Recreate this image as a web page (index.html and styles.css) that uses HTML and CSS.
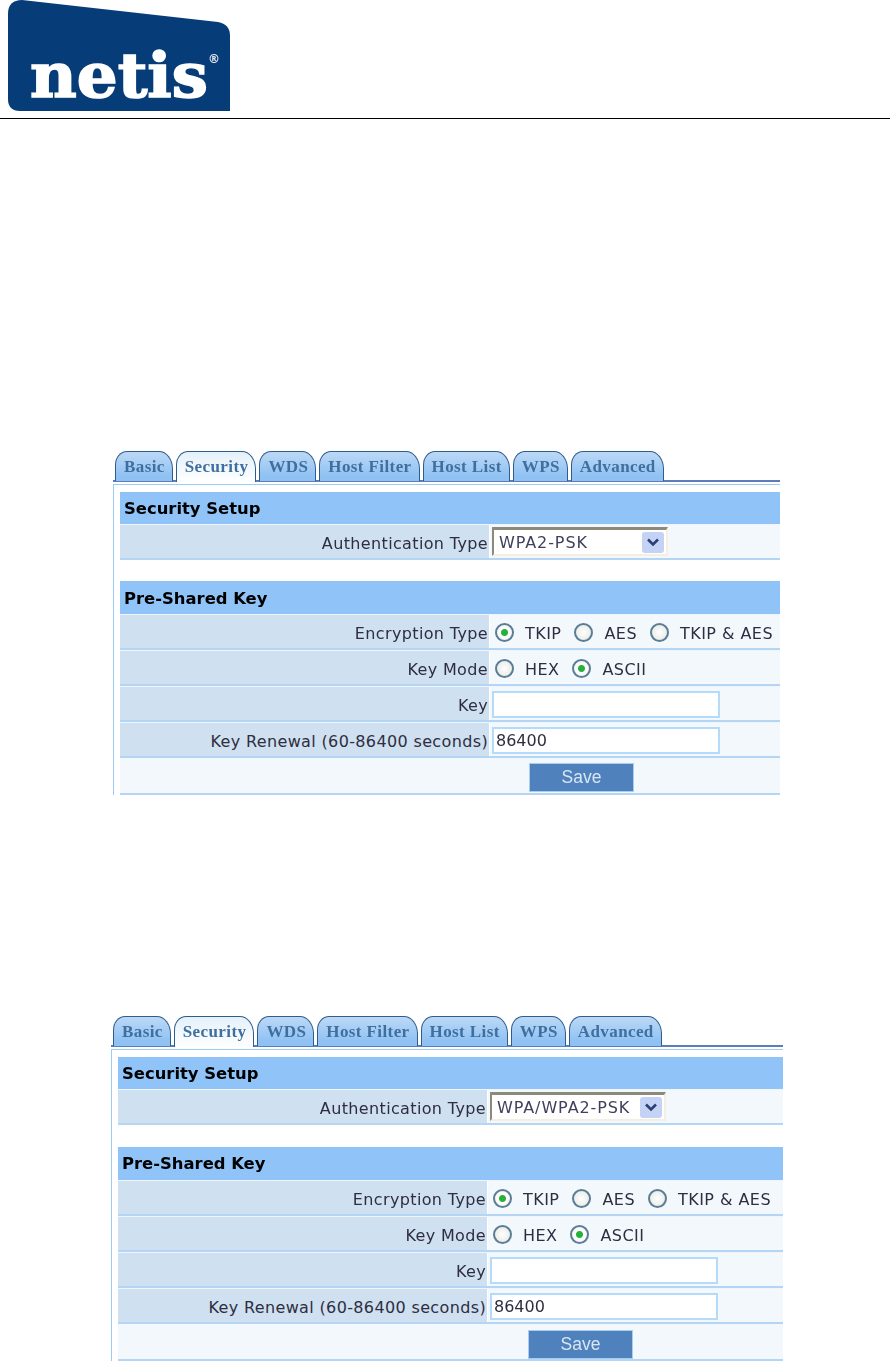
FILE: index.html
```html
<!DOCTYPE html>
<html lang="en">
<head>
<meta charset="utf-8">
<title>netis wireless security</title>
<link rel="stylesheet" href="styles.css">
</head>
<body>
<header class="doc-header">
  <svg class="logo" width="240" height="118" viewBox="0 0 240 118" role="img" aria-label="netis">
    <path d="M8 14 Q8 0 22 0 L218 22 Q230 24 230 36 L230 111 L20 111 Q8 111 8 99 Z" fill="#063c78"/>
    <text x="30" y="97" class="logo-word" textLength="178" lengthAdjust="spacingAndGlyphs">netis</text>
    <text x="208" y="63" class="logo-reg">®</text>
  </svg>
</header>

<section class="panel panel-one">
  <nav class="tabs">
    <span class="tab">Basic</span><span class="tab tab-active">Security</span><span class="tab">WDS</span><span class="tab">Host Filter</span><span class="tab">Host List</span><span class="tab">WPS</span><span class="tab">Advanced</span>
  </nav>
  <div class="frame">
    <h2 class="section-title">Security Setup</h2>
    <div class="row"><div class="label">Authentication Type</div><div class="value">
      <div class="select"><span class="select-text">WPA2-PSK</span><span class="select-arrow"><svg width="14" height="9" viewBox="0 0 14 9"><path d="M2 1.5 L7 6.5 L12 1.5" fill="none" stroke="#2b3f73" stroke-width="2.6"/></svg></span></div>
    </div></div>
    <h2 class="section-title section-next">Pre-Shared Key</h2>
    <div class="row"><div class="label">Encryption Type</div><div class="value options">
      <label class="opt"><input type="radio" name="e1" checked>TKIP</label><label class="opt"><input type="radio" name="e1">AES</label><label class="opt"><input type="radio" name="e1">TKIP &amp; AES</label>
    </div></div>
    <div class="row"><div class="label">Key Mode</div><div class="value options">
      <label class="opt"><input type="radio" name="m1">HEX</label><label class="opt"><input type="radio" name="m1" checked>ASCII</label>
    </div></div>
    <div class="row"><div class="label">Key</div><div class="value"><input class="field" type="text"></div></div>
    <div class="row"><div class="label">Key Renewal (60-86400 seconds)</div><div class="value"><input class="field" type="text" value="86400"></div></div>
    <div class="row-save"><button class="save" type="button">Save</button></div>
  </div>
</section>

<section class="panel panel-two">
  <nav class="tabs">
    <span class="tab">Basic</span><span class="tab tab-active">Security</span><span class="tab">WDS</span><span class="tab">Host Filter</span><span class="tab">Host List</span><span class="tab">WPS</span><span class="tab">Advanced</span>
  </nav>
  <div class="frame">
    <h2 class="section-title">Security Setup</h2>
    <div class="row"><div class="label">Authentication Type</div><div class="value">
      <div class="select"><span class="select-text">WPA/WPA2-PSK</span><span class="select-arrow"><svg width="14" height="9" viewBox="0 0 14 9"><path d="M2 1.5 L7 6.5 L12 1.5" fill="none" stroke="#2b3f73" stroke-width="2.6"/></svg></span></div>
    </div></div>
    <h2 class="section-title section-next">Pre-Shared Key</h2>
    <div class="row"><div class="label">Encryption Type</div><div class="value options">
      <label class="opt"><input type="radio" name="e2" checked>TKIP</label><label class="opt"><input type="radio" name="e2">AES</label><label class="opt"><input type="radio" name="e2">TKIP &amp; AES</label>
    </div></div>
    <div class="row"><div class="label">Key Mode</div><div class="value options">
      <label class="opt"><input type="radio" name="m2">HEX</label><label class="opt"><input type="radio" name="m2" checked>ASCII</label>
    </div></div>
    <div class="row"><div class="label">Key</div><div class="value"><input class="field" type="text"></div></div>
    <div class="row"><div class="label">Key Renewal (60-86400 seconds)</div><div class="value"><input class="field" type="text" value="86400"></div></div>
    <div class="row-save"><button class="save" type="button">Save</button></div>
  </div>
</section>
</body>
</html>
```
FILE: styles.css
```css
html, body { margin: 0; padding: 0; background: #fff; }
body { height: 1361px; overflow: hidden; font-family: "DejaVu Sans", sans-serif; }

.doc-header { height: 118px; border-bottom: 1px solid #000; }
.logo { display: block; filter: blur(0.4px); }
.logo-word { font-family: "DejaVu Serif", serif; font-weight: 700; font-size: 62px; fill: #fff; stroke: #fff; stroke-width: 1.6px; }
.logo-reg { font-family: "DejaVu Sans", sans-serif; font-size: 12px; font-weight: 700; fill: #dfe6ef; }

.panel { filter: blur(0.35px); }
.panel-one { margin: 332px 0 0 113px; width: 667px; }
.panel-two { margin: 221px 0 0 111px; width: 672px; }

.tabs { display: flex; height: 29px; padding-left: 2px; gap: 3px; border-bottom: 2px solid #5c7cbc; }
.tab {
  height: 30px; box-sizing: border-box; padding: 5px 7px 0 8px;
  border: 1px solid #2f5c8f; border-bottom: 0; border-radius: 12px 14px 0 0 / 14px 18px 0 0;
  background: linear-gradient(#bcd9f6, #8fc1f3 85%);
  font: 700 17px "Liberation Serif", serif; letter-spacing: 0.4px; color: #3f6f9f; white-space: nowrap;
}
.tab-active { background: linear-gradient(#e4f0fa, #fff); height: 31px; }

.frame { margin-top: 2px; padding-top: 7px; padding-left: 6px; border-top: 1px solid #9ccbf8; border-left: 1px solid #9ccbf8; }

.section-title {
  margin: 0; height: 32px; box-sizing: border-box; padding: 7px 0 0 4px;
  background: #90c4f8; color: #000; font-size: 16.4px; font-weight: 700; line-height: 19px;
}
.section-next { margin-top: 21px; height: 33px; padding-top: 8px; }
.panel-two .section-next { margin-top: 22px; padding-top: 7px; }

.row { display: flex; height: 36px; box-sizing: border-box; border-top: 1px solid #eef5fc; border-bottom: 2px solid #b5d5f5; }
.label {
  width: 369px; box-sizing: border-box; padding: 2px 1px 0 0; margin-right: 1px; flex: none;
  background: #cfe0f0; text-align: right; line-height: 33px;
  font-size: 16px; letter-spacing: 0.36px; color: #2e2e40; white-space: nowrap;
}
.value { flex: 1; display: flex; align-items: center; background: #f3f8fd; padding-left: 2px; }
.options { padding-left: 5px; gap: 13px; }
.opt { display: flex; align-items: center; gap: 11px; font-size: 16px; letter-spacing: 0.45px; color: #2e2e40; line-height: 20px; padding-top: 5px; }
.opt input {
  appearance: none; -webkit-appearance: none; margin: -3px 0 0; width: 19px; height: 19px; box-sizing: border-box;
  border: 2px solid #5b7d96; border-radius: 50%;
  background: radial-gradient(circle, #ffffff, #e3e6e0);
}
.opt input:checked { background: radial-gradient(circle, #27b03a 0 3px, #ffffff 4px, #eef0ea); }

.select {
  width: 176px; height: 29px; box-sizing: border-box; display: flex; align-items: center; justify-content: space-between;
  padding: 0 2px 0 5px; background: #fff;
  border: 2px solid #f3efe2; border-top: 3px solid #8d8a7c; border-left: 2px solid #8d8a7c;
}
.select-text { font-size: 16px; letter-spacing: 0.9px; color: #40405c; white-space: nowrap; }
.select-arrow {
  width: 22px; height: 21px; flex: none; display: flex; align-items: center; justify-content: center;
  background: #c4d2f5; border-radius: 3px;
}

.field {
  width: 228px; height: 27px; box-sizing: border-box; margin: 2px 0 0; padding: 0 2px;
  border: 2px solid #b5dbfb; background: #fff; font: 16px "DejaVu Sans", sans-serif; color: #2e2e40; outline: 0;
}

.row-save { height: 37px; box-sizing: border-box; background: #f3f8fd; border-bottom: 2px solid #b5d5f5; padding: 5px 0 0 409px; }
.panel-two .row-save { padding: 6px 0 0 410px; }
.save {
  display: block; width: 105px; height: 29px; box-sizing: border-box; padding: 0;
  background: #4f81bd; border: 1px solid #a9cdf0; color: #d8e6f4; font: 17.5px "Liberation Sans", sans-serif;
}
```
